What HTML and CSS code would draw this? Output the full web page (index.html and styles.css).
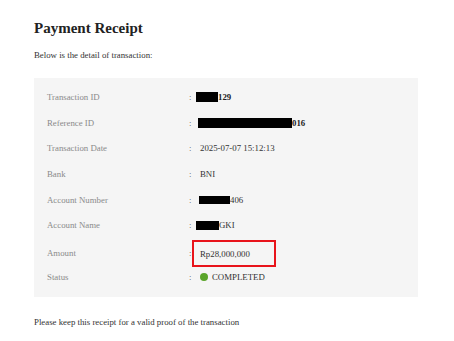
FILE: index.html
```html
<!DOCTYPE html>
<html>
<head>
<meta charset="utf-8">
<link rel="stylesheet" href="styles.css">
</head>
<body>
<div class="page">
  <h1 class="title">Payment Receipt</h1>
  <p class="intro">Below is the detail of transaction:</p>
  <div class="card">
    <div class="row">
      <div class="label">Transaction ID</div><div class="colon">:</div>
      <div class="value"><span class="redact r1"></span><b>129</b></div>
    </div>
    <div class="row">
      <div class="label">Reference ID</div><div class="colon">:</div>
      <div class="value"><span class="redact r2"></span><b>016</b></div>
    </div>
    <div class="row">
      <div class="label">Transaction Date</div><div class="colon">:</div>
      <div class="value v-pad">2025-07-07 15:12:13</div>
    </div>
    <div class="row">
      <div class="label">Bank</div><div class="colon">:</div>
      <div class="value v-pad">BNI</div>
    </div>
    <div class="row">
      <div class="label">Account Number</div><div class="colon">:</div>
      <div class="value"><span class="redact r3"></span>406</div>
    </div>
    <div class="row">
      <div class="label">Account Name</div><div class="colon">:</div>
      <div class="value"><span class="redact r4"></span>GKI</div>
    </div>
    <div class="row">
      <div class="label">Amount</div><div class="colon">:</div>
      <div class="value"><span class="amount">Rp28,000,000</span></div>
    </div>
    <div class="row">
      <div class="label">Status</div><div class="colon">:</div>
      <div class="value status"><span class="dot"></span>COMPLETED</div>
    </div>
  </div>
  <p class="footer">Please keep this receipt for a valid proof of the transaction</p>
</div>
</body>
</html>
```

FILE: styles.css
```css
html, body {
  margin: 0;
  padding: 0;
  background: #ffffff;
}
body {
  font-family: "Liberation Serif", "Times New Roman", serif;
  color: #333333;
}
.page {
  padding: 0 36px 0 34px;
}
.title {
  margin: 19px 0 0 0;
  font-size: 15px;
  line-height: 18px;
  font-weight: bold;
  color: #222222;
}
.intro {
  margin: 12px 0 0 0;
  font-size: 8.8px;
  line-height: 12px;
  color: #333333;
}
.card {
  margin-top: 17px;
  background: #f5f5f5;
  padding: 6px 13px 7px 13px;
}
.row {
  display: grid;
  grid-template-columns: 142px 8px 1fr;
  height: 25.7px;
  align-items: center;
  font-size: 8.8px;
}
.label {
  color: #8a8a8a;
}
.colon {
  color: #555555;
}
.value {
  color: #333333;
  display: flex;
  align-items: center;
  white-space: nowrap;
}
.v-pad {
  padding-left: 3px;
}
.value b {
  font-weight: bold;
  color: #222222;
}
.redact {
  display: inline-block;
  background: #000000;
}
.r1 { margin-left: -1px; width: 22px; height: 10px; }
.r2 { margin-left: 1px; width: 94px; height: 10px; }
.r3 { margin-left: 2px; width: 31px; height: 8px; }
.r4 { margin-left: -1px; width: 23px; height: 8.5px; }
.amount {
  box-sizing: border-box;
  display: flex;
  align-items: center;
  margin-left: -5px;
  margin-top: 2px;
  width: 84px;
  height: 27px;
  padding-left: 6px;
  border: 2px solid #e8141b;
}
.status {
  gap: 4px;
}
.dot {
  display: inline-block;
  width: 8px;
  height: 8px;
  border-radius: 50%;
  background: #5aa52a;
  margin-left: 3px;
}
.footer {
  margin: 19px 0 0 0;
  font-size: 8.8px;
  line-height: 12px;
  color: #333333;
}
```
